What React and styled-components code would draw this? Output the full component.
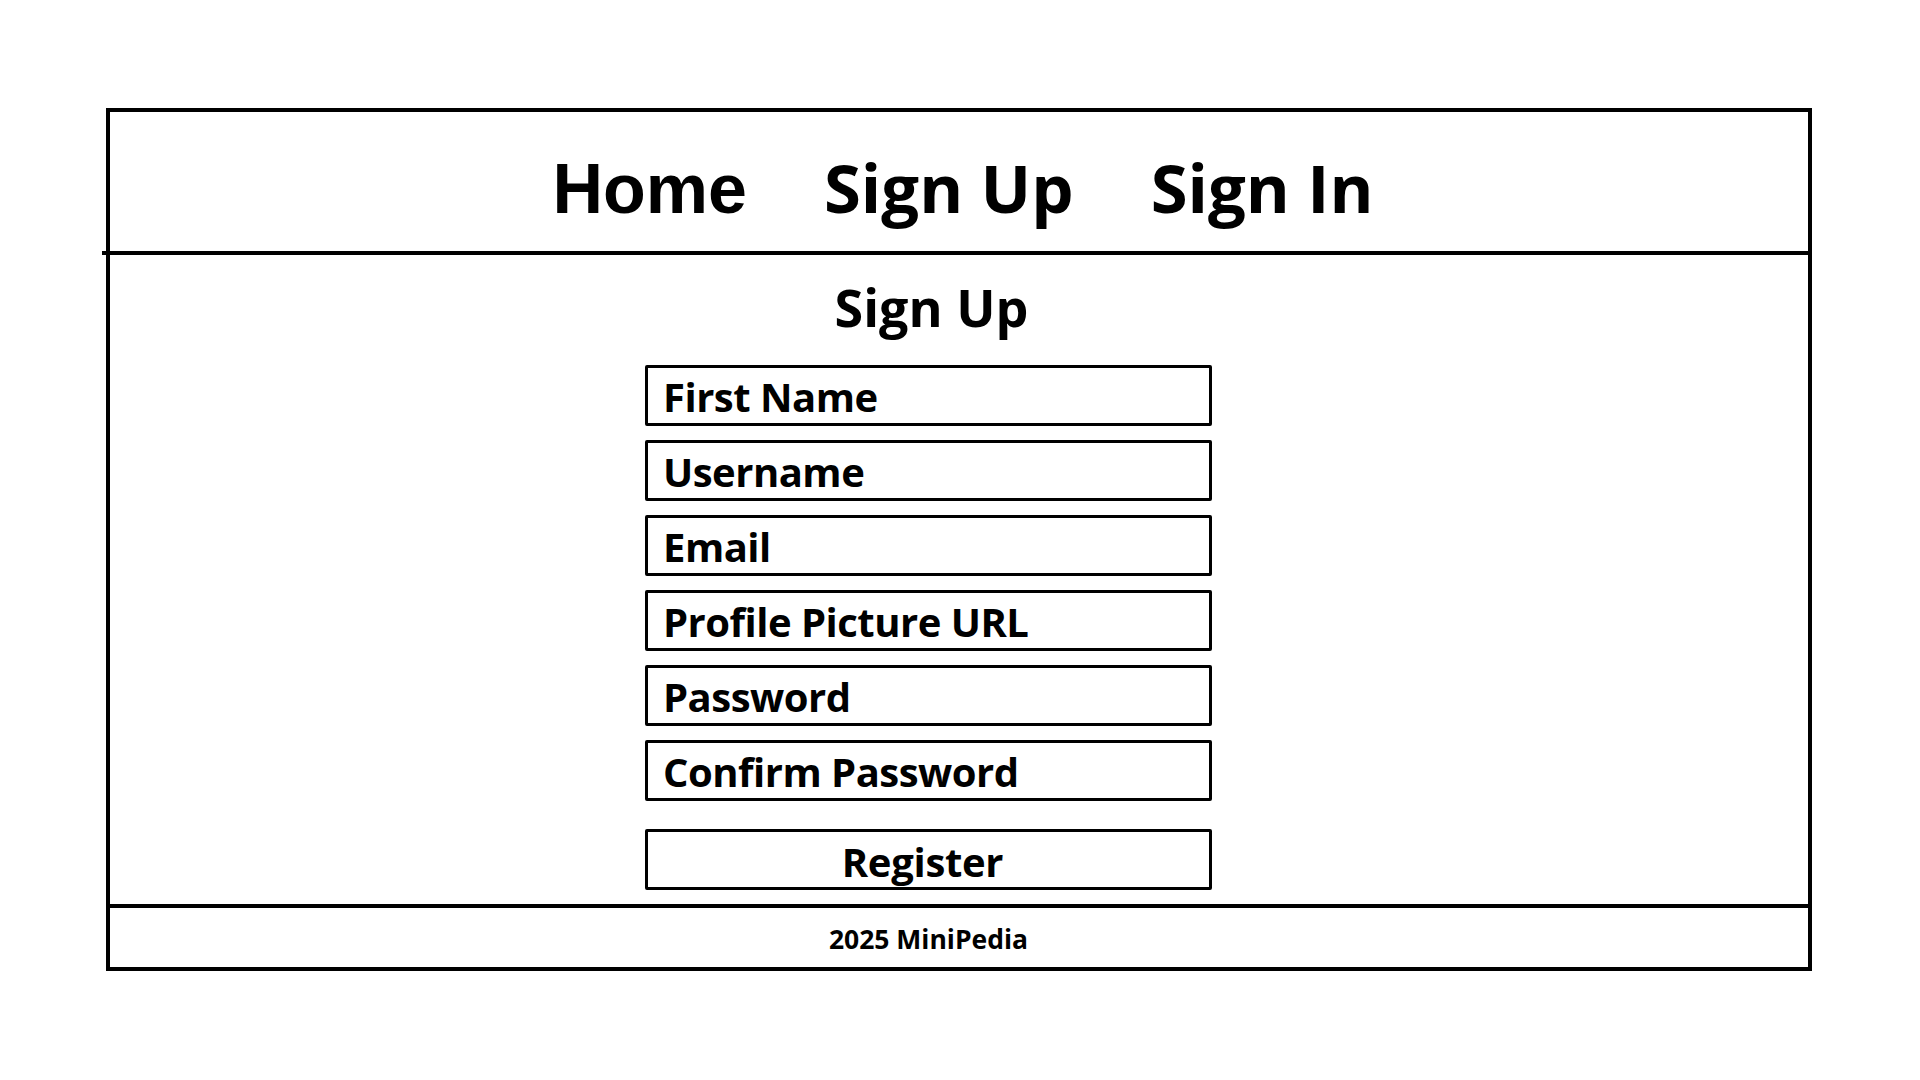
import React from 'react';
import styled, { createGlobalStyle } from 'styled-components';

const GlobalStyle = createGlobalStyle`
  html, body {
    margin: 0;
    padding: 0;
    background: #ffffff;
  }
  body {
    font-family: 'Open Sans', 'Noto Sans', sans-serif;
    color: #000000;
  }
`;

const Page = styled.div`
  width: 1920px;
  height: 1080px;
  padding: 108px 0 0 106px;
  box-sizing: border-box;
`;

const Frame = styled.div`
  width: 1706px;
  height: 863px;
  box-sizing: border-box;
  border: 4px solid #000;
  display: flex;
  flex-direction: column;
`;

const Header = styled.nav`
  position: relative;
  height: 143px;
  box-sizing: border-box;
  border-bottom: 4px solid #000;
  display: flex;
  align-items: baseline;
  justify-content: center;
  gap: 77px;
  padding: 42px 0 0 8px;
  &::after {
    content: '';
    position: absolute;
    left: -8px;
    bottom: -4px;
    width: 8px;
    height: 4px;
    background: #000;
  }
`;

const NavLink = styled.a`
  font-family: ${props =>
    props.$plain
      ? "'Liberation Sans', Arial, sans-serif"
      : "'Open Sans', 'Noto Sans', sans-serif"};
  font-size: ${props => (props.$plain ? '70px' : '67px')};
  font-weight: 700;
  color: #000;
  text-decoration: none;
  line-height: 1;
`;

const Main = styled.main`
  flex: 1;
  padding: 16px 0 0 535px;
  box-sizing: border-box;
`;

const Column = styled.div`
  width: 567px;
  display: flex;
  flex-direction: column;
`;

const Title = styled.h1`
  margin: 0 0 23px;
  font-size: 52px;
  font-weight: 700;
  text-align: center;
  line-height: 71px;
  padding-left: 6px;
`;

const Field = styled.div`
  height: 61px;
  box-sizing: border-box;
  border: 3px solid #000;
  border-radius: 2px;
  margin-bottom: ${props => (props.$last ? '28px' : '14px')};
  padding: 2px 16px 0 15px;
  display: flex;
  align-items: center;
  font-size: 40px;
  font-weight: 700;
  letter-spacing: -0.5px;
`;

const Button = styled.button`
  height: 61px;
  box-sizing: border-box;
  border: 3px solid #000;
  border-radius: 2px;
  background: #fff;
  font-family: 'Open Sans', 'Noto Sans', sans-serif;
  font-size: 40px;
  font-weight: 700;
  color: #000;
  padding: 2px 0 0;
  letter-spacing: -0.3px;
  text-indent: -12px;
  cursor: pointer;
`;

const Footer = styled.footer`
  height: 63px;
  box-sizing: border-box;
  border-top: 4px solid #000;
  padding-left: 535px;
  display: flex;
  align-items: center;
`;

const FooterText = styled.div`
  width: 567px;
  text-align: center;
  font-size: 26.5px;
  font-weight: 700;
  padding-top: 2px;
`;

const fields = [
  'First Name',
  'Username',
  'Email',
  'Profile Picture URL',
  'Password',
  'Confirm Password',
];

export default function App() {
  return (
    <Page>
      <GlobalStyle />
      <Frame>
        <Header>
          <NavLink $plain>Home</NavLink>
          <NavLink>Sign Up</NavLink>
          <NavLink>Sign In</NavLink>
        </Header>
        <Main>
          <Column>
            <Title>Sign Up</Title>
            {fields.map((f, n) => (
              <Field key={f} $last={n === fields.length - 1}>
                {f}
              </Field>
            ))}
            <Button>Register</Button>
          </Column>
        </Main>
        <Footer>
          <FooterText>2025 MiniPedia</FooterText>
        </Footer>
      </Frame>
    </Page>
  );
}
